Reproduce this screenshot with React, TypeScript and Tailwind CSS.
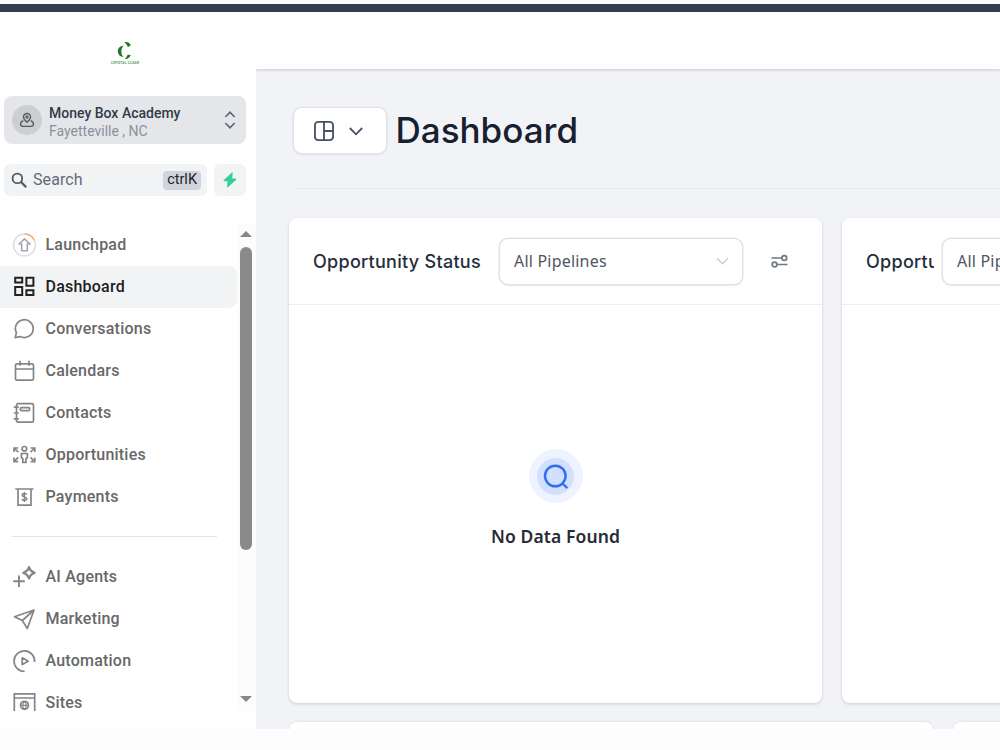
import type { ReactNode } from "react";
import clsx from "clsx";

function Icon({ children, size = 24, className = "" }: { children: ReactNode; size?: number; className?: string }) {
  return (
    <svg
      width={size}
      height={size}
      viewBox="0 0 24 24"
      fill="none"
      stroke="currentColor"
      strokeWidth={1.7}
      className={clsx("shrink-0", className)}
    >
      {children}
    </svg>
  );
}

const mainLinks = [
  {
    label: "Launchpad",
    icon: (
      <Icon>
        <circle cx="12.5" cy="12" r="11" stroke="#dcdee2" strokeWidth="1.5" />
        <path d="M12.5 1a11 11 0 0 1 10 6.5" stroke="#f9b27c" strokeWidth="1.7" />
        <path d="M12.5 5.8l5.5 5.2h-2.7v6.700h-5.600v-6.700H7z" stroke="#a3a8b2" strokeWidth="1.6" strokeLinejoin="round" />
      </Icon>
    ),
  },
  {
    label: "Dashboard",
    active: true,
    icon: (
      <Icon>
        <path d="M3.200 2.800h7v4.700h-7zM14.400 2.800h7v8h-7zM3.200 12h7v8h-7zM14.400 15.300h7V20h-7z" strokeWidth="2" />
      </Icon>
    ),
  },
  {
    label: "Conversations",
    icon: (
      <Icon>
        <path d="M3.200 20.600l1.200-4.900a8.900 8.900 0 1 1 3.800 3.800z" strokeLinejoin="round" />
      </Icon>
    ),
  },
  {
    label: "Calendars",
    icon: (
      <Icon>
        <rect x="3.500" y="4.800" width="18" height="16.400" rx="1.500" />
        <path d="M3.500 10h18M8 1.800v5M17 1.800v5" />
      </Icon>
    ),
  },
  {
    label: "Contacts",
    icon: (
      <Icon>
        <rect x="4.500" y="2.600" width="17" height="18.600" rx="1.500" />
        <rect x="8.300" y="6.600" width="9.400" height="3" rx="1.400" />
        <path d="M1.800 6.200h5M1.800 12h5M1.800 17.800h5" />
      </Icon>
    ),
  },
  {
    label: "Opportunities",
    icon: (
      <Icon>
        <circle cx="12.400" cy="5.800" r="2.300" />
        <path d="M9.400 10.500h6v4.300l-1.400.8v3.800h-3.200v-3.800l-1.400-.8z" strokeLinejoin="round" />
        <path d="M6.300 9.200L2 5M2 9V5h4.200M6.300 14.400L2 18.600M2 14.600v4h4.200M18.500 9.200L22.800 5M22.800 9V5h-4.200M18.500 14.400l4.300 4.200M22.800 14.600v4h-4.200" />
      </Icon>
    ),
  },
  {
    label: "Payments",
    icon: (
      <Icon>
        <path d="M3.300 4h18.200M6 4v16.200h13V4" />
        <path d="M14.700 9.600c-.3-.8-1.100-1.200-2.200-1.200-1.300 0-2.300.6-2.300 1.700 0 2.400 4.600 1.200 4.600 3.700 0 1.100-1 1.700-2.300 1.700s-2.200-.5-2.500-1.400M12.400 7v10" strokeWidth="1.500" />
      </Icon>
    ),
  },
];

const moreLinks = [
  {
    label: "AI Agents",
    icon: (
      <Icon className="overflow-visible">
        <path d="M17 2.200c1 3.300 2.200 4.500 5.600 5.600-3.400 1.100-4.600 2.300-5.600 5.600-1-3.300-2.200-4.500-5.600-5.600 3.400-1.100 4.600-2.300 5.600-5.600z" strokeWidth="2.300" strokeLinejoin="round" />
        <path d="M1.200 16.300h11.600M7 10.600v11.400" strokeWidth="1.900" />
      </Icon>
    ),
  },
  {
    label: "Marketing",
    icon: (
      <Icon>
        <path d="M22 3L2.500 9.700l7.800 3.800 5 8zM22 3L10.300 13.500" strokeLinejoin="round" />
      </Icon>
    ),
  },
  {
    label: "Automation",
    icon: (
      <Icon>
        <path d="M12.600 22.400A10.300 10.300 0 1 1 22.600 13" />
        <path d="M10.200 8.800v6.800l6-3.400z" strokeLinejoin="round" />
      </Icon>
    ),
  },
  {
    label: "Sites",
    icon: (
      <Icon>
        <path d="M2.300 22V2.800h20.400V22M2.300 7h20.400" />
        <circle cx="12.500" cy="14.300" r="4" />
        <path d="M8.500 14.300h8M12.500 10.300c-2.200 2.400-2.200 5.600 0 8M12.500 10.300c2.200 2.400 2.200 5.600 0 8" strokeWidth="1.200" />
      </Icon>
    ),
  },
];

function NavItem({ label, icon, active }: { label: string; icon: ReactNode; active?: boolean }) {
  return (
    <a
      className={clsx(
        "flex h-[42px] items-center gap-[9.5px] rounded-r-lg pl-3 text-base font-medium tracking-[0.22px]",
        active ? "bg-[#f2f3f5] text-[#1c1e22]" : "text-[#686868]"
      )}
    >
      <span className={active ? "text-[#222]" : "text-[#858585]"}>{icon}</span>
      {label}
    </a>
  );
}

function Sidebar() {
  return (
    <aside className="flex h-[717px] w-64 shrink-0 flex-col bg-white font-['Roboto',sans-serif]">
      {/* Logo */}
      <div className="flex h-[84px] shrink-0 items-center justify-center pb-0.5 pr-1.5">
        <svg width="30" height="24" viewBox="0 0 30 24">
          <path d="M13.500 4.500c-5 .8-8 5.500-3.500 10.500l3.500 1.200c-3-3.500-2.800-8 0-11.700z" fill="#1c7a1e" />
          <path d="M14.300 1.200c3-.6 5 .5 6.600 2.800l-3 2.300c-.5-2-1.700-3.800-3.600-5.100z" fill="#1c7a1e" />
          <path d="M14.300 17.800c2.200-1 3-2.700 3.200-4l3.300.2c-.8 2.500-3.500 4.500-6.500 3.800z" fill="#1c7a1e" />
          <text x="1" y="22.500" fontSize="3.600" fontWeight="700" fill="#5ea35f" textLength="28">CRYSTAL CLEAR</text>
        </svg>
      </div>

      {/* Account switcher */}
      <div className="ml-1 flex h-12 w-[242px] shrink-0 items-center rounded-lg bg-[#e5e6ea] pl-2 pr-2">
        <div className="flex size-[30px] items-center justify-center rounded-full bg-[#cdced1] text-[#55585e]">
          <Icon size={16}>
            <path d="M12 15.500c3.500-3 5.300-5.300 5.300-8a5.300 5.300 0 0 0-10.600 0c0 2.700 1.800 5 5.300 8z" strokeWidth="2" />
            <circle cx="12" cy="7.500" r="1.600" strokeWidth="1.800" />
            <path d="M6.500 13C.5 16 1.500 21.500 6 21.500h12c4.500 0 5.500-5.500-.5-8.500" strokeWidth="2" />
          </Icon>
        </div>
        <div className="ml-[7px] flex-1 pt-[3px]">
          <div className="text-[14px] font-medium leading-[18px] text-[#333b49]">Money Box Academy</div>
          <div className="text-sm leading-[18px] text-[#8b9099]">Fayetteville , NC</div>
        </div>
        <svg width="12" height="18" viewBox="0 0 12 18" fill="none" stroke="#656b76" strokeWidth="1.700">
          <path d="M1.300 6L6 1.300 10.700 6M1.300 12L6 16.700 10.700 12" />
        </svg>
        <div className="w-0.5" />
      </div>

      {/* Search */}
      <div className="ml-1 mt-5 flex h-8 w-[242px] shrink-0 gap-[7px]">
        <div className="flex flex-1 items-center rounded-md bg-[#f2f3f5] pl-[7px] pr-[6px]">
          <Icon size={17} className="text-[#535a66]">
            <circle cx="9" cy="9" r="6.800" strokeWidth="2.600" />
            <path d="M14 14l7.500 7.500" strokeWidth="3.200" />
          </Icon>
          <span className="ml-[5px] flex-1 text-base tracking-[0.1px] text-[#646b77]">Search</span>
          <span className="h-[19px] rounded-sm bg-[#d2d4dc] px-1 text-[14.500px] leading-[18px] text-[#20242c]">ctrlK</span>
        </div>
        <div className="flex w-8 items-center justify-center rounded-md bg-[#f2f3f5]">
          <svg width="14" height="16" viewBox="0 0 14 16" fill="#37cf98">
            <path d="M8.300.9L.8 8.100c-.5.5-.2 1.100.5 1.100h3.300L4 14.300c-.1.900.7 1.200 1.300.6l7.800-7.200c.5-.5.200-1.200-.5-1.200H9.200l.5-5c.1-.9-.8-1.200-1.400-.6z" />
          </svg>
        </div>
      </div>

      {/* Navigation */}
      <div className="mt-7 flex h-[487px] shrink-0 overflow-hidden">
        <nav className="w-[237px] shrink-0">
          {mainLinks.map((link) => (
            <NavItem key={link.label} {...link} />
          ))}
          <div className="mb-[19px] ml-3 mt-[18px] h-px w-[205px] bg-[#e4e5ec]" />
          {moreLinks.map((link) => (
            <NavItem key={link.label} {...link} />
          ))}
        </nav>
        {/* Scrollbar */}
        <div className="flex w-[19px] flex-col items-center bg-[#fcfcfc] pb-[9px] pr-px pt-[7px]">
          <svg width="12" height="6" viewBox="0 0 12 6" fill="#888">
            <path d="M0 6L6 0l6 6z" />
          </svg>
          <div className="mt-[10px] h-[303px] w-3 rounded-full bg-[#8a8a8a]" />
          <svg width="12" height="6" viewBox="0 0 12 6" fill="#888" className="mt-auto">
            <path d="M0 0l6 6 6-6z" />
          </svg>
        </div>
      </div>
    </aside>
  );
}

function StatusCard({ title, clipped }: { title: string; clipped?: boolean }) {
  return (
    <section className="h-[485px] w-[533px] shrink-0 rounded-lg bg-white shadow-[0_1px_3px_rgba(20,30,60,0.18)]">
      <header className="flex h-[87px] items-center border-b border-[#edeef1] px-6">
        <h2
          className={clsx(
            "shrink-0 overflow-hidden whitespace-nowrap pt-0.5 font-['Inter',sans-serif] text-lg font-medium tracking-[0.28px] text-[#252d3b]",
            clipped ? "w-[68px]" : "w-[169px]"
          )}
        >
          {title}
        </h2>
        <div
          className={clsx(
            "flex h-[47px] w-[244px] shrink-0 items-center justify-between rounded-[9px] border-[1.5px] border-[#dfe1e8] bg-white pl-[14px] pr-[13px] shadow-[0_0_0_0.5px_#e4e6ec,0_1px_2px_rgba(20,30,60,0.08)]",
            clipped ? "ml-2" : "ml-[17px]"
          )}
        >
          <span className="pb-px font-['Noto_Sans','Open_Sans',sans-serif] text-base tracking-[0.2px] text-[#50555e]">All Pipelines</span>
          <svg width="13" height="8" viewBox="0 0 14 8" fill="none" stroke="#c9cbd0" strokeWidth="1.400">
            <path d="M1 1l6 6 6-6" />
          </svg>
        </div>
        <svg width="17" height="14" viewBox="0 0 17 14" fill="none" stroke="#6c7a83" strokeWidth="1.700" className="mb-px ml-[28px]">
          <path d="M.5 4h10.500M6 10.500h10.500" />
          <circle cx="13.300" cy="4" r="2.400" />
          <circle cx="3.500" cy="10.500" r="2.400" />
        </svg>
      </header>
      <div className="flex flex-col items-center pt-[144px]">
        <div className="flex size-[54px] items-center justify-center rounded-full bg-[#eef3ff]">
          <div className="flex size-[37px] items-center justify-center rounded-full bg-[#d2e0fd]">
            <svg width="26" height="26" viewBox="0 0 26 26" fill="none" stroke="#2f6ff2" strokeWidth="2.400">
              <circle cx="12.300" cy="13" r="10.300" />
              <path d="M19.500 20.500l4.800 4.600" />
            </svg>
          </div>
        </div>
        <p className="mt-[20px] font-['Noto_Sans','Open_Sans',sans-serif] text-[17.500px] font-semibold leading-[26px] tracking-[0.1px] text-[#262b35]">
          No Data Found
        </p>
      </div>
    </section>
  );
}

export default function App() {
  return (
    <div className="h-[750px] w-[1000px] overflow-hidden bg-[#fdfdfd]">
      <div className="h-1 bg-[#fbf9fa]" />
      <div className="h-2 bg-[#343e4f]" />
      <div className="flex h-[717px]">
        <Sidebar />
        <main className="flex w-[744px] flex-col overflow-hidden bg-[#f2f3f7]">
          <div className="h-[57px] shrink-0 bg-white shadow-[0_1px_3px_rgba(20,30,60,0.2)]" />

          <div className="ml-[37px] mt-[38px] flex h-[47px] shrink-0 items-center">
            <button className="flex h-[47px] w-[94px] items-center justify-center gap-[15px] rounded-[9px] border-[1.5px] border-[#e0e2ea] bg-white pr-1 pt-px text-[#465062] shadow-[0_0_0_0.5px_#e4e6ec,0_1px_2px_rgba(20,30,60,0.08)]">
              <svg width="20" height="20" viewBox="0 0 21 21" fill="none" stroke="currentColor" strokeWidth="1.900">
                <rect x="1" y="1" width="19" height="19" rx="3.500" />
                <path d="M10.500 1v19M10.500 10.500H20" />
              </svg>
              <svg width="14" height="9" viewBox="0 0 14 9" fill="none" stroke="currentColor" strokeWidth="1.800">
                <path d="M.8 1L7 7.300 13.200 1" />
              </svg>
            </button>
            <h1 className="ml-[8.5px] font-['Inter',sans-serif] text-[35px] font-medium leading-[47px] text-[#182030]">Dashboard</h1>
          </div>

          <div className="ml-[37px] mt-[34px] h-px shrink-0 bg-[#e9eaef]" />

          <div className="ml-[33px] mt-[29px] flex shrink-0 gap-[20px]">
            <StatusCard title="Opportunity Status" />
            <StatusCard title="Opportunity Value" clipped />
          </div>

          <div className="ml-[33px] mt-[19px] flex shrink-0 gap-[20px]">
            <div className="h-20 w-[644px] shrink-0 rounded-lg bg-white shadow-[0_0_3px_rgba(20,30,60,0.12)]" />
            <div className="h-20 w-[422px] shrink-0 rounded-lg bg-white shadow-[0_0_3px_rgba(20,30,60,0.12)]" />
          </div>
        </main>
      </div>
    </div>
  );
}
